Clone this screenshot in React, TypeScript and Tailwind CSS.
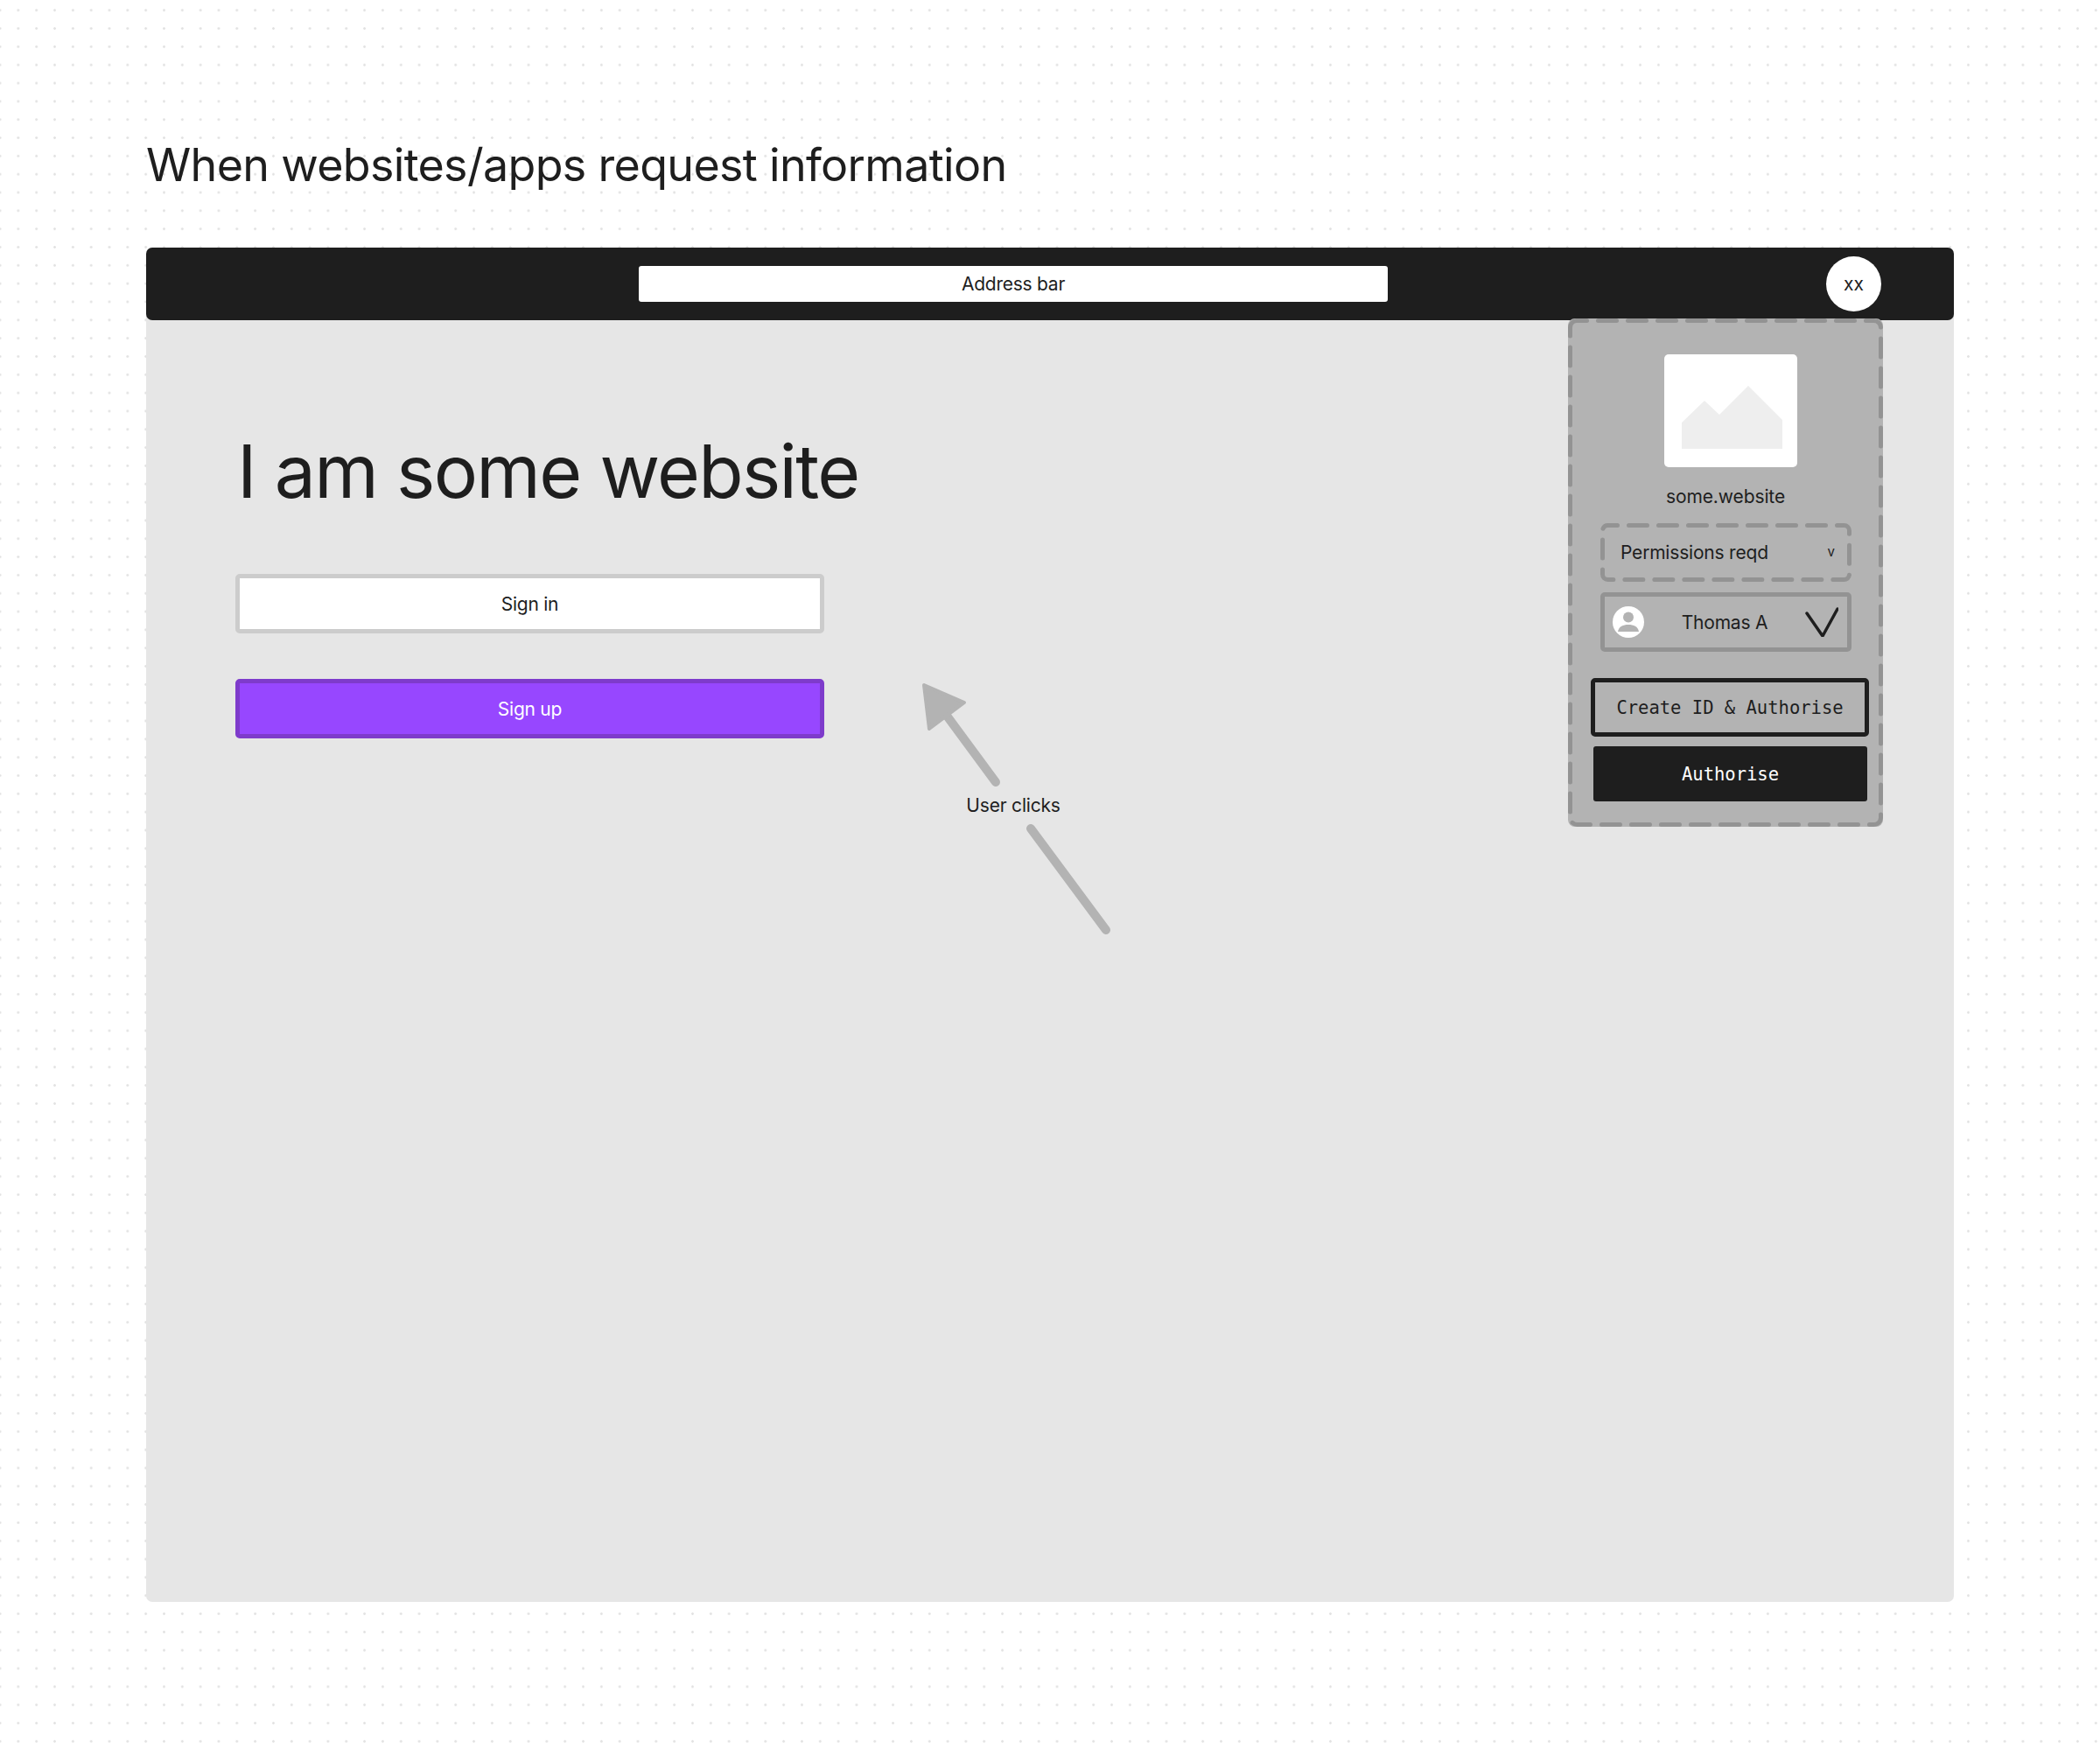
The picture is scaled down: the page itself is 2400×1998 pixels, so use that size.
import React from 'react';

const inter = 'font-["Inter",sans-serif]';
const mono = 'font-["DejaVu_Sans_Mono",monospace]';

// dashed outline with the long dashes of the reference, CSS dashed can't do these
const DashedOutline: React.FC<{ w: number; h: number; r: number }> = ({ w, h, r }) => (
  <svg className="absolute inset-0 pointer-events-none" width={w} height={h} fill="none">
    <rect
      x="2.5"
      y="2.5"
      width={w - 5}
      height={h - 5}
      rx={r}
      stroke="#939393"
      strokeWidth="5"
      strokeDasharray="21 13"
      strokeDashoffset="10"
      strokeLinecap="round"
    />
  </svg>
);

const ClickArrow: React.FC = () => (
  <svg className="absolute left-[853px] top-[477px]" width="260" height="320" viewBox="1020 760 260 320" fill="none">
    <path d="M1138 894 L1082 818" stroke="#b3b3b3" strokeWidth="10" strokeLinecap="round" />
    <path d="M1056 783 L1102 803 L1062 833 Z" fill="#b3b3b3" stroke="#b3b3b3" strokeWidth="4" strokeLinejoin="round" />
    <path d="M1178 947 L1264 1063" stroke="#b3b3b3" strokeWidth="10" strokeLinecap="round" />
  </svg>
);

const ConsentPopup: React.FC = () => (
  <div className="absolute left-[1625px] top-[81px] w-[360px] h-[581px] bg-[#b3b3b3] rounded-[8px]">
    <DashedOutline w={360} h={581} r={8} />
    <div className="flex flex-col pt-[41px]">
      <div className="ml-[110px] w-[152px] h-[129px] bg-white rounded-[5px] flex items-center justify-center">
        <svg width="152" height="129" viewBox="1902 405 152 129">
          <path d="M1922 483 L1948 458 L1965 474 L1998 441 L2037 480 L2037 513 L1922 513 Z" fill="#eeeeee" />
        </svg>
      </div>
      <div className="mt-[20px] h-[28px] w-[360px] text-center text-[21px] leading-[28px] tracking-[-0.1px] text-[#1e1e1e]">some.website</div>
      <div className="relative mt-[16px] ml-[37px] w-[287px] h-[67px] flex items-center justify-between pl-[23px] pr-[19px] text-[#1e1e1e]">
        <DashedOutline w={287} h={67} r={6} />
        <span className="text-[21px] tracking-[-0.2px]">Permissions reqd</span>
        <span className="text-[15px]">v</span>
      </div>
      <div className="mt-[12px] ml-[37px] w-[287px] h-[68px] border-[5px] border-[#939393] rounded-[5px] flex items-center justify-between pl-[9px] pr-[10px] text-[#1e1e1e]">
        <svg width="36" height="36" viewBox="0 0 36 36">
          <circle cx="18" cy="18" r="18" fill="#ffffff" />
          <circle cx="18" cy="12.5" r="6" fill="#b3b3b3" />
          <path d="M6 29 C7 23 12 21 18 21 C24 21 29 23 30 29 Z" fill="#b3b3b3" />
        </svg>
        <span className="text-[21px] tracking-[-0.2px] pt-[1px]">Thomas A</span>
        <svg width="38" height="34" viewBox="2063 693 38 34" fill="none">
          <path d="M2065 700 L2083 726 L2100 695" stroke="#1e1e1e" strokeWidth="3.5" strokeLinecap="round" strokeLinejoin="round" />
        </svg>
      </div>
      <div className={`mt-[30px] ml-[26px] w-[318px] h-[67px] border-[5px] border-[#1e1e1e] rounded-[5px] flex items-center justify-center pt-[2px] text-[20.5px] text-[#1e1e1e] ${mono}`}>
        Create ID &amp; Authorise
      </div>
      <div className={`mt-[11px] ml-[29px] w-[313px] h-[63px] bg-[#1e1e1e] rounded-[3px] flex items-center justify-center pt-[2px] text-[20.5px] text-white ${mono}`}>
        Authorise
      </div>
    </div>
  </div>
);

const App: React.FC = () => {
  return (
    <div className={`w-[2400px] h-[1998px] bg-white bg-[radial-gradient(circle,#e2e2e2_1.1px,transparent_1.6px)] bg-[size:20.83px_20.83px] bg-[position:-10.4px_1.3px] pl-[167px] pt-[150px] ${inter}`}>
      <h1 className="h-[76px] text-[52px] leading-[78px] text-[#1e1e1e] font-[430] tracking-[-0.68px]">When websites/apps request information</h1>
      <div className="relative mt-[57px] w-[2066px] h-[1548px] bg-[#e6e6e6] rounded-[7px]">
        <div className="relative h-[83px] bg-[#1e1e1e] rounded-[7px] flex items-center">
          <div className="ml-[563px] w-[856px] h-[41px] bg-white rounded-[3px] flex items-center justify-center text-[21px] tracking-[-0.25px] text-[#1e1e1e] pt-[1px]">
            Address bar
          </div>
          <div className="ml-[501px] w-[63px] h-[63px] rounded-full bg-white flex items-center justify-center text-[21px] text-[#1e1e1e]">
            xx
          </div>
        </div>
        <div className="pl-[102px] pt-[120px]">
          <div className="ml-[2px] h-[105px] text-[84px] leading-[105px] text-[#1e1e1e] font-[430] tracking-[-1.7px]">I am some website</div>
          <div className="mt-[65px] w-[673px] h-[68px] bg-white border-[5px] border-[#cccccc] rounded-[5px] flex items-center justify-center pt-[1px] text-[21px] tracking-[-0.25px] text-[#1e1e1e]">
            Sign in
          </div>
          <div className="mt-[52px] w-[673px] h-[68px] bg-[#9747ff] border-[5px] border-[#7e3bcb] rounded-[5px] flex items-center justify-center pt-[1px] text-[21px] tracking-[-0.25px] text-white">
            Sign up
          </div>
        </div>
        <ClickArrow />
        <div className="absolute left-[903px] top-[623px] w-[176px] text-center text-[21px] leading-[30px] tracking-[-0.2px] text-[#1e1e1e]">User clicks</div>
        <ConsentPopup />
      </div>
    </div>
  );
};

export default App;
